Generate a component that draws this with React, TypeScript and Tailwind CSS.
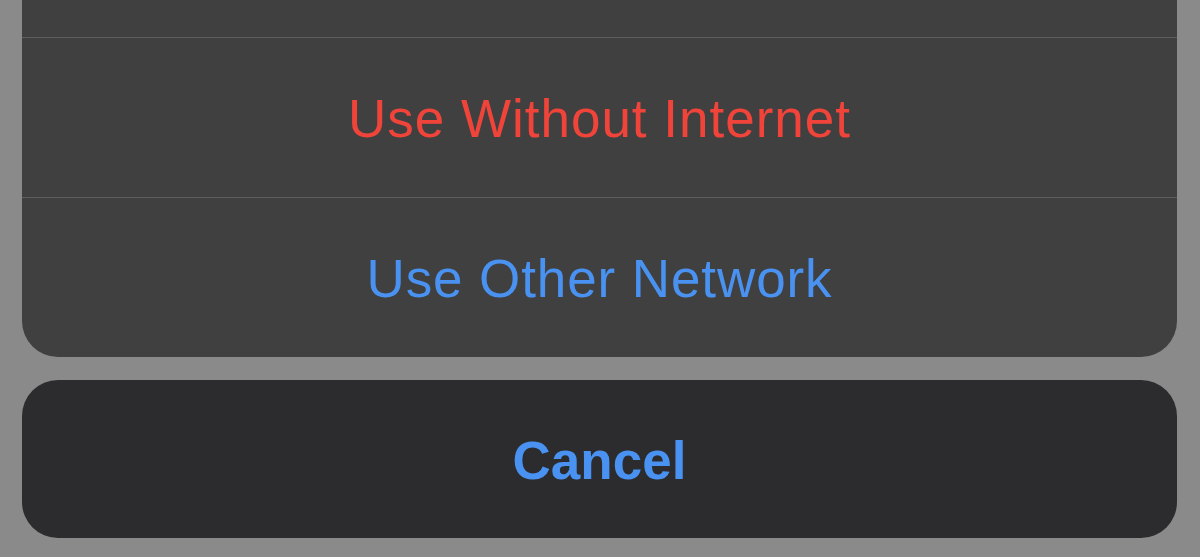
export default function App() {
  return (
    <div
      className="w-[1200px] h-[557px] overflow-hidden bg-[#8a8a8a] pl-[22px] pr-[23px] flex flex-col"
      style={{ fontFamily: '"Liberation Sans", Arial, sans-serif' }}
    >
      <div className="bg-[#404040] rounded-b-[36px] flex flex-col">
        <div className="h-[37px]" />
        <div className="h-px bg-[#5e5e5e]" />
        <div className="h-[159px] pt-[2px] flex items-center justify-center text-[#f0443a] text-[53px] tracking-[1px]">
          Use Without Internet
        </div>
        <div className="h-px bg-[#5e5e5e]" />
        <div className="h-[159px] pt-[2px] flex items-center justify-center text-[#4a92f1] text-[53px] tracking-[0.9px]">
          Use Other Network
        </div>
      </div>
      <div className="mt-[23px] h-[158px] pt-[3px] bg-[#2c2c2e] rounded-[36px] flex items-center justify-center text-[#4a92f1] text-[53px] font-bold">
        Cancel
      </div>
    </div>
  );
}
